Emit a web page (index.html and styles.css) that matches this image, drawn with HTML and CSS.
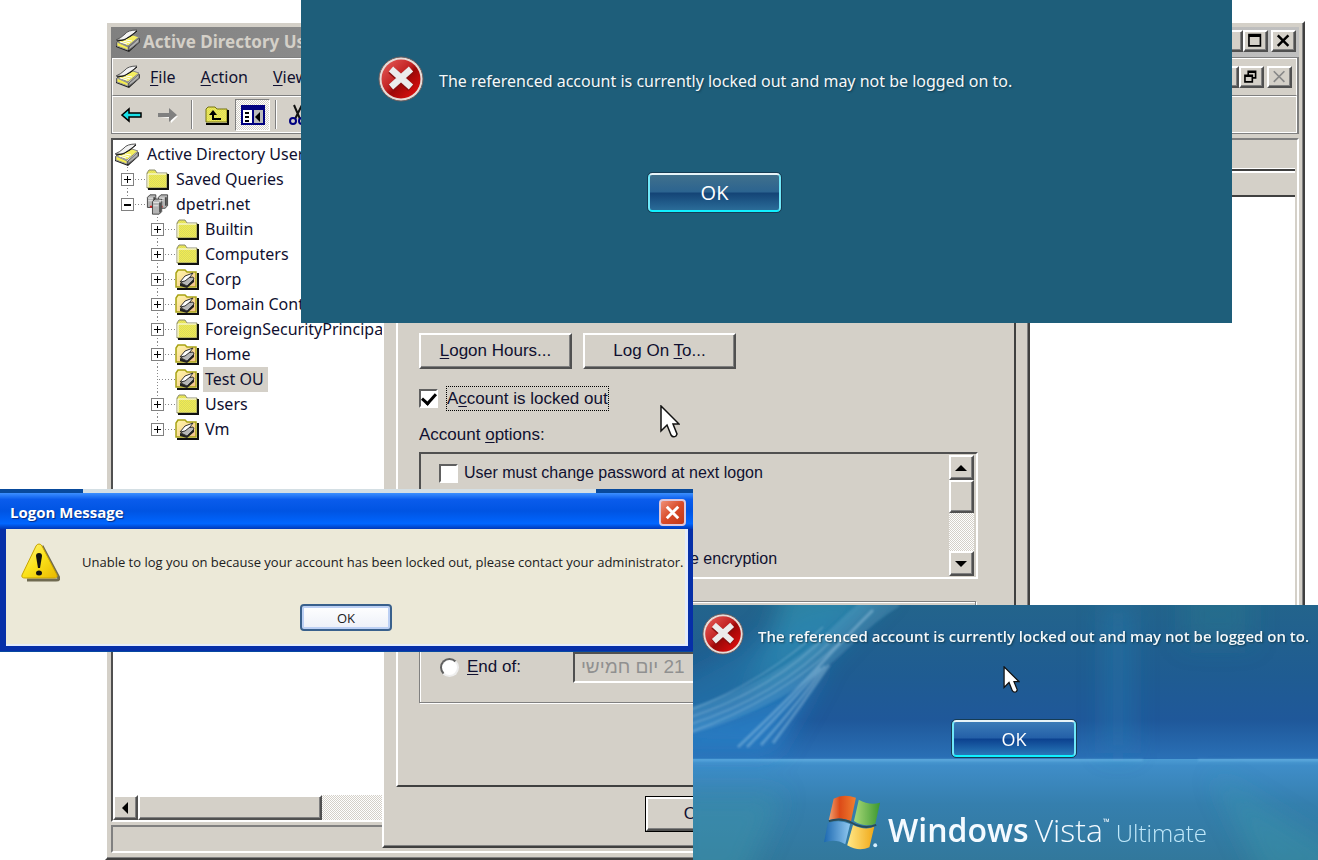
FILE: index.html
```html
<!DOCTYPE html>
<html lang="en">
<head>
<meta charset="utf-8">
<title>Account lockout messages</title>
<link rel="stylesheet" href="styles.css">
</head>
<body>
<svg class="defs" aria-hidden="true">
  <defs>
    <pattern id="dither" width="2" height="2" patternUnits="userSpaceOnUse"><rect width="2" height="2" fill="#f4ee50"/><rect width="1" height="1" fill="#d8d860"/><rect x="1" y="1" width="1" height="1" fill="#d8d860"/></pattern>
    <linearGradient id="ball" x1="0" y1="0" x2="1" y2="1"><stop offset="0" stop-color="#e8605c"/><stop offset=".45" stop-color="#c22222"/><stop offset=".55" stop-color="#9c0808"/><stop offset="1" stop-color="#f01010"/></linearGradient>
    <linearGradient id="warn" x1="0" y1="0" x2="1" y2="1"><stop offset="0" stop-color="#fff68a"/><stop offset=".5" stop-color="#fbe21a"/><stop offset="1" stop-color="#e8b800"/></linearGradient>
    <linearGradient id="paper" x1="0" y1="0" x2="1" y2="1"><stop offset="0" stop-color="#fff8a8"/><stop offset="1" stop-color="#f4c08c"/></linearGradient>
    <symbol id="book" viewBox="0 0 26 24">
      <path d="M1 13 L14 18 L25 9 V13 L14 23 L1 18Z" fill="#222"/>
      <path d="M2 13 L13 18 V21 L2 17Z" fill="#f4ec50" stroke="#999"/>
      <path d="M14 18 L24 9 V13 L14 21Z" fill="#b0b0b0" stroke="#666"/>
      <path d="M2 12 L8 10 L18 6 L24 8 L13 17Z" fill="#f4ee60" stroke="#888"/>
      <path d="M5 13 L12 15 M8 12 L15 14 M11 11 L17 12" stroke="#fff" stroke-width="1"/>
      <path d="M1 11 Q6 9 10 5 Q13 1 22 1 Q20 4 15 7 Q10 11 7 11Z" fill="#f2f2f2" stroke="#555"/>
      <path d="M2 12 L9 11 L16 7 L22 2" fill="none" stroke="#111"/>
    </symbol>
    <symbol id="folder" viewBox="0 0 25 21">
      <path d="M2 19 V4 L4 1 H10 L12 4 H22 V19Z" fill="url(#dither)" stroke="#8c8c70"/>
      <path d="M3 18 V5 H21" fill="none" stroke="#fff"/>
      <path d="M3 20 H23 V5" fill="none" stroke="#111" stroke-width="2"/>
    </symbol>
    <symbol id="ou" viewBox="0 0 25 21">
      <path d="M1 18 V4 L3 1 H10 L12 3 H21 V18Z" fill="url(#paper)" stroke="#a8a214" stroke-width="1.5"/>
      <path d="M2 20 H23 V4" fill="none" stroke="#111" stroke-width="2"/>
      <path d="M5 14 L12 16 L19 10 V13 L12 19 L5 17Z" fill="#222"/>
      <path d="M6 14 L12 9 L18 8 L19 10 L12 17Z" fill="#b8b8b8" stroke="#333"/>
      <path d="M5 13 L10 7 L18 4 L15 8 L10 12Z" fill="#fff" stroke="#333"/>
    </symbol>
    <symbol id="servers" viewBox="0 0 26 25">
      <g stroke="#333" fill="#b4b4b4"><path d="M1 4 L4 1 H11 V14 L8 16 H1Z"/><path d="M14 4 L17 1 H25 V14 L22 17 H14Z"/></g>
      <path d="M9 4 V14 M23 4 V14" stroke="#444" stroke-width="2"/>
      <path d="M4 15 h3 M17 15 h2" stroke="#e02020" stroke-width="2"/>
      <path d="M7 9 L10 6 H18 V21 L15 24 H7Z" stroke="#333" fill="#b4b4b4"/>
      <path d="M16 10 V22" stroke="#444" stroke-width="2"/>
      <path d="M2 5 H8 M15 5 H21 M8 10 H15 M8 14 H14 M2 8 H7 M15 8 H20" stroke="#eee"/>
    </symbol>
    <symbol id="error" viewBox="0 0 46 46">
      <circle cx="23" cy="23" r="22" fill="#e6dcd8" stroke="#6c5c5c"/>
      <circle cx="23" cy="23" r="19.5" fill="url(#ball)"/>
      <path d="M13 14 L33 32 M33 14 L13 32" stroke="#8a1010" stroke-width="8"/>
      <path d="M13 13 L33 31 M33 13 L13 31" stroke="#ececec" stroke-width="6.5"/>
    </symbol>
    <symbol id="cursor" viewBox="0 0 20 34">
      <path d="M1 1 V26 L7 20 L11 30 Q13 33 16 31 L17 29 L13 19 H19Z" fill="#fff" stroke="#111" stroke-width="1.5"/>
    </symbol>
  </defs>
</svg>

<main class="desktop">
  <section class="window console" aria-label="Active Directory Users">
    <header class="titlebar">
      <svg class="app-icon"><use href="#book"/></svg>
      <h1 class="title">Active Directory Users</h1>
      <div class="controls">
        <button class="ctl" aria-label="Minimize"><svg viewBox="0 0 24 22"><path d="M5 16 H13" stroke="#000" stroke-width="3"/></svg></button>
        <button class="ctl" aria-label="Maximize"><svg viewBox="0 0 24 22"><path d="M4 3 H18 V17 H4Z M4 5 H18" fill="none" stroke="#000" stroke-width="2"/></svg></button>
        <button class="ctl ctl-close" aria-label="Close"><svg viewBox="0 0 24 22"><path d="M5 4 L18 17 M18 4 L5 17" stroke="#000" stroke-width="3"/></svg></button>
      </div>
    </header>
    <div class="bars">
      <nav class="menubar">
        <svg class="app-icon"><use href="#book"/></svg>
        <button class="menu"><u>F</u>ile</button>
        <button class="menu"><u>A</u>ction</button>
        <button class="menu"><u>V</u>iew</button>
        <div class="controls">
          <button class="ctl" aria-label="Minimize child"></button>
          <button class="ctl" aria-label="Restore"><svg viewBox="0 0 24 22"><path d="M8 8 V4 H17 V12 H14 M8 5 H17 M4 9 H13 V17 H4Z M4 10 H13" fill="none" stroke="#000" stroke-width="2"/></svg></button>
          <button class="ctl ctl-close" aria-label="Close child" disabled><svg viewBox="0 0 24 22"><path d="M5 4 L18 17 M18 4 L5 17" stroke="#888" stroke-width="2"/></svg></button>
        </div>
      </nav>
      <div class="toolbar">
        <button class="tool" aria-label="Back"><svg viewBox="0 0 22 16"><path d="M1 8 L8 2 V6 H20 V10 H8 V14Z" fill="#18e0e8" stroke="#000" stroke-width="1.5"/></svg></button>
        <button class="tool" aria-label="Forward"><svg viewBox="0 0 22 16"><path d="M21 9 L14 16 V11 H3" fill="#fff"/><path d="M20 8 L12 1 V6 H1 V10 H12 V15Z" fill="#808080"/></svg></button>
        <span class="sep"></span>
        <button class="tool tool-wide" aria-label="Up one level"><svg viewBox="0 0 26 20"><path d="M2 17 V4 L4 2 H11 L13 4 H23 V17Z" fill="url(#dither)" stroke="#777410"/><path d="M2 19 H24 V5" fill="none" stroke="#000" stroke-width="2"/><path d="M9 15 V7 M9 14 H17" fill="none" stroke="#000" stroke-width="2"/><path d="M5 10 L9 5 L13 10Z"/></svg></button>
        <button class="tool tool-wide pressed" aria-label="Show console tree"><svg viewBox="0 0 26 20"><path d="M2 1 H24 V19 H2Z" fill="#fff" stroke="#000080" stroke-width="2"/><path d="M2 3 H24" stroke="#000080" stroke-width="4"/><path d="M13 5 H23 V18 H13Z" fill="#bbb"/><path d="M13 4 V19" stroke="#000080" stroke-width="2"/><path d="M5 8 H9 M5 12 H9 M5 16 H9" stroke="#000" stroke-width="2"/><path d="M20 7 V17 L15 12Z" fill="#000"/></svg></button>
        <span class="sep"></span>
        <button class="tool cut" aria-label="Cut"><svg viewBox="0 0 22 24"><path d="M7 2 L13 16 M15 2 L8 16" stroke="#111" stroke-width="2"/><circle cx="6" cy="18" r="3" fill="none" stroke="#000080" stroke-width="2"/><circle cx="15" cy="18" r="3" fill="none" stroke="#000080" stroke-width="2"/></svg></button>
      </div>
    </div>
    <div class="panes">
      <div class="tree-pane">
        <ul class="tree">
          <li class="node root"><svg class="node-icon"><use href="#book"/></svg><span class="label">Active Directory Users</span></li>
          <li class="node"><span class="branch"><i class="box plus"></i></span><svg class="node-icon"><use href="#folder"/></svg><span class="label">Saved Queries</span></li>
          <li class="node last"><span class="branch"><i class="box"></i></span><svg class="node-icon"><use href="#servers"/></svg><span class="label">dpetri.net</span></li>
          <li class="node child"><span class="branch"><i class="box plus"></i></span><svg class="node-icon"><use href="#folder"/></svg><span class="label">Builtin</span></li>
          <li class="node child"><span class="branch"><i class="box plus"></i></span><svg class="node-icon"><use href="#folder"/></svg><span class="label">Computers</span></li>
          <li class="node child"><span class="branch"><i class="box plus"></i></span><svg class="node-icon"><use href="#ou"/></svg><span class="label">Corp</span></li>
          <li class="node child"><span class="branch"><i class="box plus"></i></span><svg class="node-icon"><use href="#ou"/></svg><span class="label">Domain Cont</span></li>
          <li class="node child"><span class="branch"><i class="box plus"></i></span><svg class="node-icon"><use href="#folder"/></svg><span class="label">ForeignSecurityPrincipa</span></li>
          <li class="node child"><span class="branch"><i class="box plus"></i></span><svg class="node-icon"><use href="#ou"/></svg><span class="label">Home</span></li>
          <li class="node child"><span class="branch leaf"></span><svg class="node-icon"><use href="#ou"/></svg><span class="label selected">Test OU</span></li>
          <li class="node child"><span class="branch"><i class="box plus"></i></span><svg class="node-icon"><use href="#folder"/></svg><span class="label">Users</span></li>
          <li class="node child last"><span class="branch"><i class="box plus"></i></span><svg class="node-icon"><use href="#ou"/></svg><span class="label">Vm</span></li>
        </ul>
        <div class="hscroll">
          <button class="raised scroll-btn" aria-label="Scroll left"><svg viewBox="0 0 20 20"><path d="M13 4 V16 L7 10Z"/></svg></button>
          <div class="raised hthumb"></div>
        </div>
      </div>
      <div class="list-pane">
        <div class="description"></div>
        <div class="columns"></div>
        <div class="items"></div>
      </div>
    </div>
    <footer class="status"></footer>
  </section>

  <section class="window account" aria-label="Account">
    <div class="tab-page">
      <div class="button-row">
        <button class="raised push"><span><u>L</u>ogon Hours...</span></button>
        <button class="raised push"><span>Log On <u>T</u>o...</span></button>
      </div>
      <div class="locked"><input class="check" type="checkbox" id="locked" checked><label class="focus" for="locked">A<u>c</u>count is locked out</label></div>
      <p class="caption">Account <u>o</u>ptions:</p>
      <div class="options">
        <div class="option-list">
          <div class="option"><input class="check" type="checkbox" id="change"><label for="change">User must change password at next logon</label></div>
          <div class="option option-end">e encryption</div>
        </div>
        <div class="vscroll">
          <button class="raised scroll-btn" aria-label="Scroll up"><svg viewBox="0 0 20 20"><path d="M4 13 H16 L10 7Z"/></svg></button>
          <div class="raised vthumb"></div>
          <div class="track"></div>
          <button class="raised scroll-btn" aria-label="Scroll down"><svg viewBox="0 0 20 20"><path d="M4 7 H16 L10 13Z"/></svg></button>
        </div>
      </div>
      <div class="expires">
        <input class="radio" type="radio" id="endof"><label for="endof"><u>E</u>nd of:</label>
        <input class="date" dir="rtl" aria-label="Expiry date" value="21 יום חמישי" disabled>
      </div>
    </div>
    <button class="default-btn"><span class="raised">OK</span></button>
    <svg class="cursor cursor-account"><use href="#cursor"/></svg>
  </section>

  <section class="logon" aria-label="Lockout message">
    <div class="message">
      <svg class="error-icon"><use href="#error"/></svg>
      <p>The referenced account is currently locked out and may not be logged on to.</p>
    </div>
    <button class="glass">OK</button>
  </section>

  <section class="xp" aria-label="Logon Message">
    <div class="xp-strip"></div>
    <div class="xp-frame">
      <header class="xp-title"><h2>Logon Message</h2><button class="xp-close" aria-label="Close"><svg viewBox="0 0 24 24"><path d="M6 6 L18 18 M18 6 L6 18" stroke="#fff" stroke-width="3"/></svg></button></header>
      <div class="xp-body">
        <div class="xp-message">
          <svg class="warn-icon" viewBox="0 0 40 40"><path d="M22 4 L39 36 Q39 38 36 38 H7" fill="none" stroke="#6f6a50" stroke-width="3"/><path d="M19 2 Q21 2 22 4 L37 33 Q38 36 34 36 H5 Q1 36 2 33 L16 4 Q17 2 19 2Z" fill="url(#warn)" stroke="#c8a400"/><path d="M19 11 Q22 11 22 14 L20 26 H18 L16 14 Q16 11 19 11Z" fill="#111"/><ellipse cx="19" cy="31" rx="3" ry="2.5" fill="#111"/></svg>
          <p>Unable to log you on because your account has been locked out, please contact your administrator.</p>
        </div>
        <button class="xp-ok">OK</button>
      </div>
    </div>
  </section>

  <section class="vista" aria-label="Windows Vista logon">
    <svg class="aurora" viewBox="0 0 625 255" preserveAspectRatio="none" aria-hidden="true">
      <defs>
        <linearGradient id="sky" x1="0" y1="0" x2="0" y2="1"><stop offset="0" stop-color="#23648c"/><stop offset=".28" stop-color="#1f5c92"/><stop offset=".45" stop-color="#1f589a"/><stop offset=".602" stop-color="#2a70b6"/><stop offset=".604" stop-color="#4c9cd4"/><stop offset=".63" stop-color="#3f8dc8"/><stop offset=".78" stop-color="#357fae"/><stop offset="1" stop-color="#32789c"/></linearGradient>
        <filter id="soft" filterUnits="userSpaceOnUse" x="-60" y="-60" width="760" height="380"><feGaussianBlur stdDeviation="12"/></filter>
        <filter id="edge" filterUnits="userSpaceOnUse" x="-20" y="-20" width="665" height="300"><feGaussianBlur stdDeviation="1.2"/></filter>
      </defs>
      <rect width="625" height="255" fill="url(#sky)"/>
      <g filter="url(#soft)">
        <path d="M90 -20 H200 L120 50 L50 90 Q80 40 90 -20Z" fill="#35a4be" opacity=".5"/>
        <path d="M-20 80 L90 20 L200 -20 L110 80 L-20 130Z" fill="#2b86b8" opacity=".4"/>
        <path d="M-20 148 V120 Q90 100 130 60 L80 148Z" fill="#2b86ce" opacity=".7"/>
        <path d="M410 0 H440 V148 H410Z" fill="#2c80b8" opacity=".35"/>
        <path d="M490 -20 H560 V40 H490Z" fill="#288090" opacity=".3"/>
        <path d="M520 170 L650 250 V275 H570Z" fill="#3fa0ac" opacity=".35"/>
        <path d="M-20 190 H90 L50 280 H-20Z" fill="#3b94aa" opacity=".5"/>
      </g>
      <g filter="url(#edge)" fill="none">
        <path d="M-10 118 Q90 90 150 30 Q175 5 200 -10" stroke="#8cc8e8" stroke-width="26" opacity=".2"/>
        <path d="M-5 106 Q75 75 130 22 M-5 113 Q80 85 136 28 M-5 120 Q84 92 142 32 M-5 128 Q90 94 150 34" stroke="#b8dcf0" stroke-width="1.5" opacity=".3"/>
        <path d="M45 142 Q95 95 125 62 Q145 40 180 5 M54 142 Q100 95 128 63 M68 140 Q108 95 132 61 M80 138 Q112 95 136 60" stroke="#b8dcf0" stroke-width="3" opacity=".35"/>
        <path d="M-5 154.500 H450 V155.500 H-5Z M505 154.500 H640 V155.500 H505Z" fill="#80c8f0" opacity=".8"/>
      </g>
    </svg>
    <div class="vista-content">
      <div class="message">
        <svg class="error-icon"><use href="#error"/></svg>
        <p>The referenced account is currently locked out and may not be logged on to.</p>
      </div>
      <button class="glass">OK</button>
      <div class="brand">
        <svg class="flag" viewBox="0 0 60 60" aria-hidden="true">
          <defs>
            <linearGradient id="fr"><stop offset="0" stop-color="#f0a070"/><stop offset=".4" stop-color="#dc4a18"/><stop offset="1" stop-color="#f08030"/></linearGradient>
            <linearGradient id="fg"><stop offset="0" stop-color="#a8d878"/><stop offset="1" stop-color="#3c9830"/></linearGradient>
            <linearGradient id="fb"><stop offset="0" stop-color="#1c68b0"/><stop offset="1" stop-color="#90c8f0"/></linearGradient>
            <linearGradient id="fy"><stop offset="0" stop-color="#ffe888"/><stop offset="1" stop-color="#f0a818"/></linearGradient>
          </defs>
          <path d="M10 5 Q20 -1 33 4 L28 28 Q18 23 5 27Z" fill="url(#fr)"/>
          <path d="M36 6 Q47 12 58 9 L53 31 Q42 35 31 28Z" fill="url(#fg)"/>
          <path d="M4 30 Q16 26 27 31 L22 52 Q12 46 0 50Z" fill="url(#fb)"/>
          <path d="M30 32 Q42 38 52 34 L47 55 Q36 60 24 53Z" fill="url(#fy)"/>
          <path d="M5 28 Q18 24 29 30 Q42 37 54 32" fill="none" stroke="#2c4c58" stroke-width="2"/>
          <circle cx="53" cy="53" r="2" fill="#d8f0ff"/>
        </svg>
        <p class="wordmark">Windows<span class="name">Vista</span><span class="tm">™</span><span class="edition">Ultimate</span></p>
      </div>
    </div>
    <svg class="cursor cursor-vista"><use href="#cursor"/></svg>
  </section>
</main>
</body>
</html>
```
FILE: styles.css
```css
* { box-sizing: border-box; }

body {
  margin: 0;
  background: #fff;
  color: #101030;
  font-family: "Liberation Sans", Arial, sans-serif;
  font-size: 17px;
}

h1, h2, p, ul { margin: 0; padding: 0; }
button, input { margin: 0; font: inherit; color: inherit; }
button { padding: 0; border: 0; background: none; }
u { text-underline-offset: 2px; }
.defs { position: absolute; width: 0; height: 0; }

.desktop { position: relative; min-height: 860px; height: 100vh; overflow: hidden; }

.window {
  position: absolute;
  background: #d4d0c8;
  border: 2px solid;
  border-color: #fff #404040 #404040 #fff;
  box-shadow: inset -1px -1px 0 #808080;
}

.raised {
  background: #d4d0c8;
  border: 2px solid;
  border-color: #fff #505050 #505050 #fff;
  box-shadow: inset -1px -1px 0 #808080;
}

/* Management console */
.console {
  inset: 21px 13px 0 105px;
  display: flex;
  flex-direction: column;
  padding: 4px;
  font-family: "Noto Sans", sans-serif;
  font-size: 16px;
}
.titlebar {
  display: flex;
  align-items: center;
  gap: 2px;
  height: 30px;
  padding: 0 3px 2px 4px;
  background: linear-gradient(90deg, #808080, #c0c0c0);
}
.title { color: #d4d0c8; font-size: 17px; font-weight: 700; white-space: nowrap; }
.app-icon { width: 26px; height: 24px; flex: none; }
.controls { display: flex; margin-left: auto; }
.ctl {
  width: 25px;
  height: 22px;
  background: #d4d0c8;
  border: 2px solid;
  border-color: #fff #505050 #505050 #fff;
  box-shadow: inset -1px -1px 0 #808080;
}
.ctl svg { display: block; width: 21px; height: 18px; }
.ctl-close { margin-left: 3px; }

.bars { border: 1px solid #808080; border-right-width: 2px; }
.menubar, .toolbar { display: flex; align-items: center; border: 1px solid #fff; }
.menubar { height: 38px; padding: 0 4px 0 2px; border-bottom-color: #808080; }
.menu { margin-left: 9px; padding-right: 16px; }
.toolbar { height: 37px; padding-left: 4px; }
.tool { width: 30px; height: 30px; margin-right: 6px; }
.tool svg { display: block; width: 22px; height: 18px; margin: auto; }
.tool-wide { margin: 0; width: 36px; }
.tool-wide svg { width: 26px; height: 20px; }
.cut svg { height: 24px; }
.pressed {
  width: 35px;
  height: 32px;
  margin-right: 3px;
  border: 1px solid;
  border-color: #808080 #fff #fff #808080;
  background: repeating-conic-gradient(#fff 0 25%, #d4d0c8 0 50%) 0 0 / 2px 2px;
}
.sep { width: 2px; height: 29px; border-left: 1px solid #808080; border-right: 1px solid #fff; margin: 0 6px 0 2px; }

.panes { display: flex; flex: 1; min-height: 0; gap: 4px; margin-top: 4px; }
.tree-pane {
  display: flex;
  flex-direction: column;
  width: 280px;
  background: #fff;
  border: 2px solid;
  border-color: #505050 #fff #fff #505050;
}
.tree { flex: 1; list-style: none; padding-top: 2px; }
.node { display: flex; align-items: center; height: 25px; padding-left: 8px; white-space: nowrap; }
.root { padding-left: 1px; }
.child { padding-left: 38px; }
.node-icon { width: 25px; height: 21px; flex: none; }
.root .node-icon { width: 26px; height: 24px; }
.label { margin-left: 3px; padding: 0 3px; line-height: 25px; }
.root .label { margin-left: 4px; }
.child .label { padding: 0 4px 0 2px; }
.selected { background: #d4d0c8; }
.branch {
  display: flex;
  align-items: center;
  align-self: stretch;
  width: 24px;
  background:
    repeating-linear-gradient(180deg, #888 0 1px, transparent 1px 3px) 6px 0 / 1px 100% no-repeat,
    repeating-linear-gradient(90deg, #888 0 1px, transparent 1px 3px) 8px 12px / 16px 1px no-repeat;
}
.last .branch { background-size: 1px 50%, 16px 1px; }
.box {
  width: 13px;
  height: 13px;
  border: 1px solid #808080;
  background: linear-gradient(#000, #000) center / 7px 2px no-repeat, #fff;
}
.plus {
  background:
    linear-gradient(#000, #000) center / 7px 1px no-repeat,
    linear-gradient(#000, #000) center / 1px 7px no-repeat,
    #fff;
}
.hscroll {
  display: flex;
  height: 25px;
  background: repeating-conic-gradient(#fff 0 25%, #d4d0c8 0 50%) 0 0 / 2px 2px;
}
.scroll-btn { width: 25px; height: 25px; flex: none; }
.scroll-btn svg { display: block; width: 20px; height: 20px; }
.hthumb { width: 184px; }

.list-pane { display: flex; flex-direction: column; flex: 1; padding-right: 2px; border-top: 2px solid #808080; border-right: 2px solid #fff; }
.description { height: 29px; border-bottom: 1px solid #fff; }
.columns { height: 28px; border-top: 2px solid #404040; border-bottom: 2px solid #404040; box-shadow: inset 0 2px 0 #fff; }
.items { flex: 1; background: #fff; }
.status { height: 28px; margin: 3px 0 1px; border: 2px solid; border-color: #808080 #fff #fff #808080; }

/* Account properties */
.account { top: 310px; left: 382px; width: 648px; padding: 0 12px 14px; }
.tab-page {
  padding: 21px 36px 82px 21px;
  border: 2px solid;
  border-color: transparent #404040 #404040 #fff;
  border-top: 0;
}
.button-row { display: flex; gap: 11px; }
.push { width: 153px; height: 36px; }
.locked { display: flex; align-items: center; gap: 8px; margin-top: 17px; }
.check {
  appearance: none;
  display: grid;
  place-items: center;
  width: 19px;
  height: 19px;
  flex: none;
  background: #fff;
  border: 2px solid;
  border-color: #606060 #fff #fff #606060;
}
.check:checked::after {
  content: "";
  width: 11px;
  height: 6px;
  border: solid #000;
  border-width: 0 0 3px 3px;
  transform: translateY(-1px) rotate(-48deg);
}
.focus { line-height: 23px; border: 1px dotted #000; }
.caption { margin-top: 13px; line-height: 22px; }
.options {
  display: flex;
  height: 127px;
  margin-top: 6px;
  border: 2px solid;
  border-color: #505050 #fff #fff #505050;
}
.option-list { flex: 1; display: flex; flex-direction: column; justify-content: space-between; padding: 8px 0 7px 18px; font-size: 16px; }
.option { display: flex; align-items: center; gap: 6px; line-height: 22px; }
.option-end { padding-left: 251px; }
.vscroll { display: flex; flex-direction: column; width: 27px; padding: 1px 2px 1px 0; }
.vthumb { height: 33px; }
.track { flex: 1; background: repeating-conic-gradient(#fff 0 25%, #d4d0c8 0 50%) 0 0 / 2px 2px; }
.expires {
  display: flex;
  align-items: center;
  height: 102px;
  margin: 22px 2px 0 0;
  padding: 30px 20px 0;
  border: 1px solid #808080;
  box-shadow: 1px 1px 0 #fff, inset 1px 1px 0 #fff;
}
.radio {
  appearance: none;
  width: 19px;
  height: 19px;
  margin-right: 8px;
  flex: none;
  background: #fff;
  border: 2px solid;
  border-color: #606060 #eee #eee #606060;
  border-radius: 50%;
}
.expires label { flex: none; }
.date {
  width: 300px;
  height: 31px;
  margin-left: 52px;
  padding: 0 6px;
  text-align: left;
  font-size: 19px;
  color: #909090;
  background: #d4d0c8;
  border: 2px solid;
  border-color: #505050 #fff #fff #505050;
}
.default-btn { display: flex; width: 102px; height: 36px; margin: 9px 0 0 249px; border: 1px solid #000; }
.default-btn .raised { flex: 1; line-height: 30px; }

.cursor { position: absolute; width: 20px; height: 34px; }
.cursor-account { left: 276px; top: 93px; }
.cursor-vista { left: 310px; top: 61px; width: 17px; height: 28px; }

/* Logon screen message */
.logon {
  position: absolute;
  inset: 0 86px auto 301px;
  height: 323px;
  padding: 56px 77px 0;
  background: #1e5e7a;
}
.message { display: flex; align-items: center; color: #f4f8fa; font-family: "Open Sans", sans-serif; white-space: nowrap; }
.message p { padding-top: 4px; text-shadow: 1px 1px 2px #123c50; }
.logon .message { gap: 15px; font-family: "Noto Sans", sans-serif; font-size: 16px; }
.error-icon { width: 46px; height: 46px; flex: none; }
.glass {
  display: block;
  border: 2px solid;
  border-color: #e8f4f8 #70e8f8 #10f0ff #70e8f8;
  border-radius: 4px;
  outline: 1px solid #163c54;
  background: linear-gradient(#40708c, #2c6490 48%, #144476 52%, #2a6c98);
  color: #fff;
  font-family: "Open Sans", sans-serif;
}
.logon .glass { width: 133px; height: 39px; margin: 71px auto 0 270px; font-size: 20px; }

/* Classic logon message */
.xp { position: absolute; left: 0; top: 489px; width: 693px; }
.xp-strip { height: 4px; background: linear-gradient(90deg, #084a9c 12%, #d4dfe4 12% 86%, #084a9c 86%); }
.xp-frame { padding: 0 5px 5px 6px; background: #062fa8; border-bottom: 1px solid #0848a0; }
.xp-title {
  display: flex;
  align-items: center;
  justify-content: space-between;
  height: 36px;
  margin: 0 -5px 0 -6px;
  padding: 2px 7px 0 10px;
  background: linear-gradient(#3c90ff, #0a5cec 18%, #0054e3 50%, #0066ff 85%, #0038b8);
}
.xp-title h2 { color: #fff; font: 700 15px "Open Sans", sans-serif; text-shadow: 1px 1px 1px #052a80; }
.xp-close { width: 27px; height: 27px; border: 2px solid #dcc8dc; border-radius: 4px; background: linear-gradient(135deg, #f09078, #d84a28 50%, #c03818); }
.xp-close svg { display: block; width: 23px; height: 23px; }
.xp-body { height: 117px; padding: 13px 0 0 14px; background: #ece9d8; border-right: 3px solid #e4ecfc; border-bottom: 2px solid #e4ecfc; color: #202020; font-family: "Open Sans", sans-serif; }
.xp-message { display: flex; align-items: flex-start; gap: 22px; height: 62px; font-size: 13px; white-space: nowrap; }
.xp-message p { line-height: 18px; padding-top: 11px; }
.warn-icon { width: 40px; height: 40px; flex: none; }
.xp-ok {
  display: block;
  width: 92px;
  height: 27px;
  margin-left: 280px;
  border: 2px solid #39608c;
  border-radius: 4px;
  background: linear-gradient(#fff, #ecf0f8);
  box-shadow: inset 0 0 0 2px #bcd0f4;
  font-size: 13px;
}

/* Vista logon */
.vista { position: absolute; inset: 605px 0 0 693px; overflow: hidden; background: #2a6ca0; }
.aurora { position: absolute; inset: 0; width: 100%; height: 100%; }
.vista-content { position: relative; padding: 8px 9px 0; }
.vista .message { gap: 14px; font-size: 15px; font-weight: 600; }
.vista .error-icon { width: 42px; height: 42px; }
.vista .glass { width: 124px; height: 37px; margin: 65px auto 0 250px; font-size: 18px; background: linear-gradient(#3c7cb8, #2460a8 48%, #0c4290 52%, #2878b8); }
.brand { display: flex; align-items: flex-start; gap: 6px; margin: 36px 0 0 122px; }
.flag { width: 58px; height: 60px; flex: none; }
.wordmark { display: flex; align-items: baseline; padding-top: 14px; color: #f4faff; font: 600 32px "Open Sans", sans-serif; line-height: 46px; }
.name { margin-left: 6px; font-weight: 300; }
.tm { align-self: flex-start; font-size: 9px; font-weight: 400; line-height: 30px; }
.edition { margin-left: 6px; color: #c0e8fa; font-size: 24px; font-weight: 300; }
```
